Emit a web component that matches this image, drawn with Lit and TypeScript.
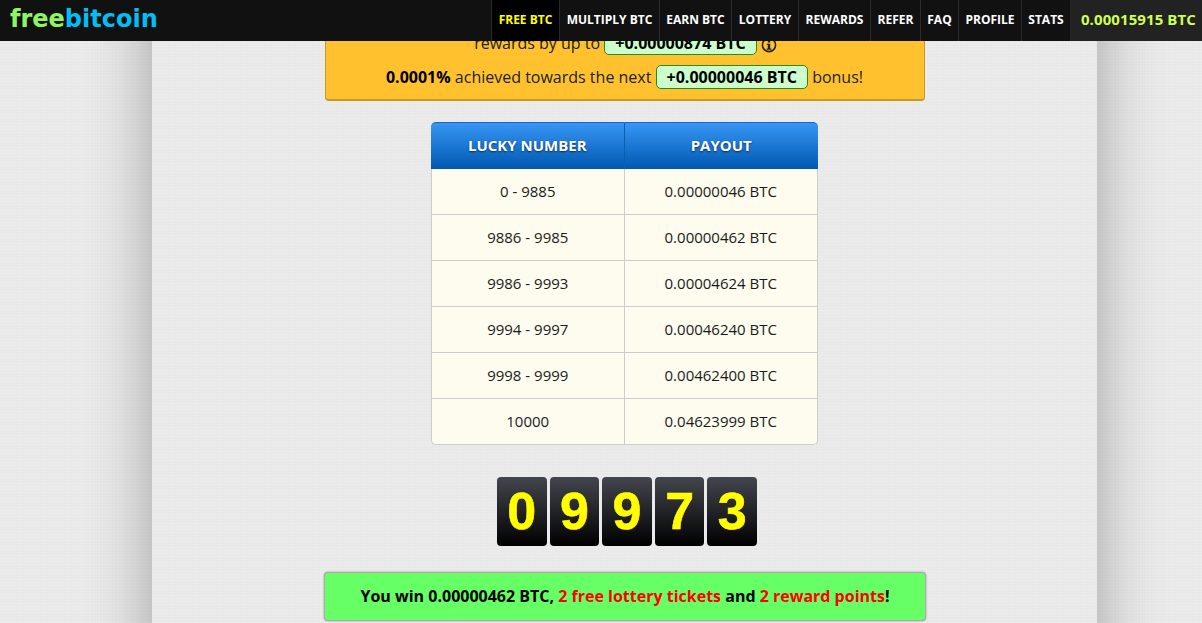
import { LitElement, html, css } from "lit";
import { customElement } from "lit/decorators.js";

const NAV: [string, number][] = [
  ["FREE BTC", 68], ["MULTIPLY BTC", 100], ["EARN BTC", 72], ["LOTTERY", 67], ["REWARDS", 72],
  ["REFER", 50], ["FAQ", 38], ["PROFILE", 63], ["STATS", 49],
];
const ROWS = [
  ["0 - 9885", "0.00000046 BTC"],
  ["9886 - 9985", "0.00000462 BTC"],
  ["9986 - 9993", "0.00004624 BTC"],
  ["9994 - 9997", "0.00046240 BTC"],
  ["9998 - 9999", "0.00462400 BTC"],
  ["10000", "0.04623999 BTC"],
];
const DIGITS = ["0", "9", "9", "7", "3"];

@customElement("app-root")
export class AppRoot extends LitElement {
  static styles = css`
    :host {
      display: block;
      height: 623px;
      overflow: hidden;
      font-family: "Open Sans", sans-serif;
      color: #111;
      background-color: #e8e8e8;
      background-image: linear-gradient(rgba(255,255,255,.12) 1px, transparent 1px), linear-gradient(90deg, rgba(255,255,255,.08) 1px, transparent 1px);
      background-size: 3px 3px;
    }
    .top {
      position: relative;
      z-index: 2;
      height: 41px;
      background: #111;
      display: flex;
      align-items: stretch;
    }
    .logo {
      margin-left: 10px;
      font-family: "DejaVu Sans", sans-serif;
      font-weight: 700;
      font-size: 24px;
      line-height: 38px;
      color: #8ef562;
      flex: 1;
    }
    .logo span { color: #00bff3; }
    nav { display: flex; }
    nav a {
      display: flex;
      align-items: center;
      justify-content: center;
      border-left: 1px solid #2b2b2b;
      color: #fff;
      font-size: 12px;
      font-weight: 700;
      padding-bottom: 3px;
      box-sizing: border-box;
      white-space: nowrap;
    }
    nav a.on { background: #000; color: #ff0; }
    .bal {
      width: 132px;
      box-sizing: border-box;
      background: #222;
      color: #ccff55;
      font-size: 15px;
      letter-spacing: .1px;
      font-weight: 700;
      display: flex;
      align-items: center;
      justify-content: flex-end;
      padding: 0 6px 3px 0;
    }
    .page {
      width: 945px;
      margin: -100px 0 0 152px;
      padding-top: 100px;
      height: 682px;
      box-sizing: content-box;
      box-shadow: 0 0 60px rgba(0,0,0,.32);
      background-color: #e8e8e8;
      background-image: linear-gradient(rgba(255,255,255,.12) 1px, transparent 1px), linear-gradient(90deg, rgba(255,255,255,.08) 1px, transparent 1px);
      background-size: 3px 3px;
      display: flex;
      flex-direction: column;
      align-items: center;
    }
    .notice {
      width: 600px;
      box-sizing: border-box;
      margin: -15px 0 0 0;
      height: 75px;
      background: #ffc22e;
      border: 1px solid #c79a20;
      border-bottom-width: 2px;
      border-top: 0;
      border-radius: 0 0 4px 4px;
      text-align: center;
      font-size: 16px;
      line-height: 34px;
      color: #222;
      flex: none;
    }
    .line { height: 34px; white-space: nowrap; }
    .line.first { padding-left: 2px; }
    .notice b { color: #000; }
    .pill {
      display: inline-block;
      background: #ccffcc;
      border: 1px solid #1f8f1f;
      border-radius: 5px;
      padding: 0 10px;
      height: 24px;
      box-sizing: border-box;
      line-height: 22px;
      font-weight: 700;
      color: #000;
    }
    .info {
      display: inline-block;
      vertical-align: -4px;
    }
    table {
      flex: none;
      margin-top: 21px;
      width: 387px;
      border-collapse: separate;
      border-spacing: 0;
      table-layout: fixed;
    }
    th {
      height: 47px;
      padding: 0 0 2px;
      box-sizing: border-box;
      background: linear-gradient(#3796f5, #0058b0);
      color: #fff;
      font-size: 15px;
      font-weight: 700;
      text-shadow: 0 1px 2px rgba(0,0,0,.6);
      border-top: 1px solid #1268c0;
    }
    th:first-child { border-radius: 5px 0 0 0; border-right: 1px solid #0a5db0; }
    th:last-child { border-radius: 0 5px 0 0; }
    td {
      height: 46px;
      padding: 0 0 2px;
      box-sizing: border-box;
      background: #fefcee;
      font-size: 15px;
      text-align: center;
      color: #1a1a1a;
      border-bottom: 1px solid #ccc;
    }
    td:first-child { border-left: 1px solid #ccc; border-right: 1px solid #ccc; }
    td:last-child { border-right: 1px solid #ccc; }
    tr:last-child td:first-child { border-radius: 0 0 0 5px; }
    tr:last-child td:last-child { border-radius: 0 0 5px 0; }
    .digits {
      flex: none;
      margin: 32px 0 0 5px;
      display: flex;
      gap: 3px;
    }
    .digit {
      width: 49.6px;
      height: 69px;
      border-radius: 4px;
      background: linear-gradient(#43464d, #000);
      color: #ff0;
      font-family: "Liberation Sans", sans-serif;
      font-weight: 700;
      font-size: 52px;
      line-height: 69px;
      text-align: center;
      -webkit-text-stroke: .6px #ff0;
      text-shadow: 1px 1px 1px #4a1500;
    }
    .win {
      flex: none;
      margin: 26px 0 0 1px;
      width: 602px;
      height: 49px;
      box-sizing: border-box;
      background: #66ff66;
      border: 1px solid #aaa;
      border-radius: 4px;
      box-shadow: 0 0 2px rgba(0,0,0,.4);
      text-align: center;
      font-size: 16px;
      font-weight: 700;
      line-height: 46px;
      color: #000;
    }
    .win span { color: #f00; }
  `;

  render() {
    return html`
      <div class="top">
        <div class="logo">free<span>bitcoin</span></div>
        <nav>${NAV.map(([n, w], i) => html`<a class=${i === 0 ? "on" : ""} style="width:${w}px">${n}</a>`)}</nav>
        <div class="bal">0.00015915 BTC</div>
      </div>
      <div class="page">
        <div class="notice">
          <div class="line first">rewards by up to <span class="pill">+0.00000874 BTC</span>
            <svg class="info" width="16" height="16" viewBox="0 0 16 16"><circle cx="8" cy="8" r="6.6" fill="none" stroke="#222" stroke-width="1.6"/><rect x="6.8" y="3.4" width="2.4" height="2.2" fill="#222"/><path d="M5.8 6.8h3.4v4.6h1.1v1.3H5.7v-1.3h1.1V8.1h-1z" fill="#222"/></svg>
          </div>
          <div class="line"><b>0.0001%</b> achieved towards the next <span class="pill">+0.00000046 BTC</span> bonus!</div>
        </div>
        <table>
          <thead><tr><th>LUCKY NUMBER</th><th>PAYOUT</th></tr></thead>
          <tbody>${ROWS.map((r) => html`<tr><td>${r[0]}</td><td>${r[1]}</td></tr>`)}</tbody>
        </table>
        <div class="digits">${DIGITS.map((d) => html`<div class="digit">${d}</div>`)}</div>
        <div class="win">You win 0.00000462 BTC, <span>2 free lottery tickets</span> and <span>2 reward points</span>!</div>
      </div>
    `;
  }
}
